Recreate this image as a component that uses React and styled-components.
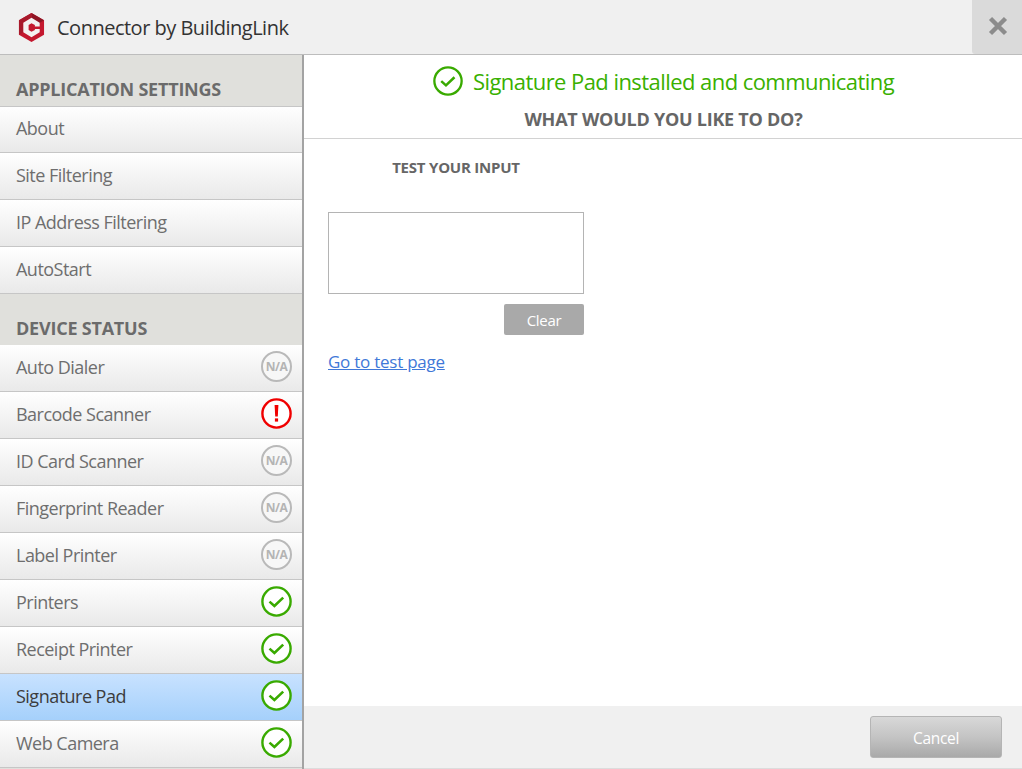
import React from 'react';
import styled, { createGlobalStyle } from 'styled-components';

const GlobalStyle = createGlobalStyle`
  html, body { margin: 0; padding: 0; background: #fff; }
  body { font-family: "Open Sans", "Noto Sans", sans-serif; overflow: hidden; }
`;

const Shell = styled.div`
  width: 1022px;
  height: 769px;
  display: flex;
  flex-direction: column;
  overflow: hidden;
`;

const TitleBar = styled.header`
  height: 54px;
  flex: none;
  display: flex;
  align-items: center;
  justify-content: space-between;
  background: #f0f0f0;
  border-bottom: 1px solid #bdbdbd;
`;

const Brand = styled.div`
  display: flex;
  align-items: center;
  gap: 12px;
  padding-left: 18px;
  font-size: 20px;
  letter-spacing: -0.5px;
  color: #333;
`;

const CloseButton = styled.button`
  width: 50px;
  height: 54px;
  border: 0;
  padding: 0 0 2px 2px;
  background: #dadada;
  border-bottom-left-radius: 3px;
  display: flex;
  align-items: center;
  justify-content: center;
`;

const Body = styled.div`
  flex: 1;
  display: flex;
  min-height: 0;
`;

const Sidebar = styled.nav`
  width: 302px;
  flex: none;
  border-right: 2px solid #a3a3a3;
  background: #e0e0dc;
`;

const SectionTitle = styled.h2`
  margin: 0;
  height: 51px;
  box-sizing: border-box;
  display: flex;
  align-items: flex-end;
  padding: 0 0 5px 16px;
  background: #e0e0dc;
  font-size: 18px;
  line-height: 24px;
  font-weight: 700;
  letter-spacing: -0.22px;
  color: #6b6b6b;
`;

const Row = styled.div`
  height: 47px;
  box-sizing: border-box;
  display: flex;
  align-items: center;
  justify-content: space-between;
  padding: 0 10px 2px 16px;
  border-bottom: 1px solid #c6c6c6;
  background: ${p => p.$active
    ? 'linear-gradient(#c8e2ff, #a5d0fb)'
    : 'linear-gradient(#ffffff, #e9e9e9)'};
  color: ${p => p.$active ? '#3c3c3c' : '#6e6e6e'};
  font-size: 18px;
  letter-spacing: -0.52px;

  &:first-of-type {
    box-shadow: inset 0 1px #c6c6c6;
  }
`;

const IconSlot = styled.span`
  display: flex;
  margin-bottom: 1px;
`;

const Main = styled.main`
  flex: 1;
  display: flex;
  flex-direction: column;
  min-width: 0;
`;

const StatusHead = styled.div`
  height: 84px;
  flex: none;
  box-sizing: border-box;
  border-bottom: 1px solid #d2d2d2;
  display: flex;
  flex-direction: column;
  align-items: center;
  padding: 10px 0 0 1px;
`;

const StatusLine = styled.div`
  display: flex;
  align-items: center;
  gap: 10px;
  height: 32px;
  font-size: 22px;
  letter-spacing: -0.56px;
  color: #39b000;
`;

const Question = styled.div`
  margin-top: 11px;
  font-size: 18px;
  line-height: 22px;
  font-weight: 700;
  letter-spacing: -0.25px;
  color: #666;
`;

const Content = styled.div`
  flex: 1;
  padding: 18px 0 0 24px;
`;

const InputColumn = styled.div`
  width: 256px;
  display: flex;
  flex-direction: column;
`;

const InputTitle = styled.div`
  text-align: center;
  font-size: 15px;
  line-height: 20px;
  font-weight: 700;
  letter-spacing: -0.22px;
  color: #666;
`;

const SignatureBox = styled.div`
  height: 82px;
  box-sizing: border-box;
  margin-top: 35px;
  border: 1px solid #b4b4b4;
  background: #fff;
`;

const ClearButton = styled.button`
  align-self: flex-end;
  width: 80px;
  height: 31px;
  margin-top: 10px;
  border: 0;
  border-radius: 2px;
  background: #a9a9a9;
  color: #fff;
  font-family: inherit;
  font-size: 15px;
  letter-spacing: -0.3px;
`;

const TestLink = styled.a`
  margin-top: 16px;
  font-size: 17px;
  line-height: 22px;
  letter-spacing: -0.25px;
  color: #3f78d8;
  text-decoration: underline;
`;

const Footer = styled.footer`
  height: 63px;
  flex: none;
  box-sizing: border-box;
  background: #f0f0f0;
  border-bottom: 1px solid #dcdcdc;
  display: flex;
  justify-content: flex-end;
  align-items: flex-start;
  padding: 10px 20px 0 0;
`;

const CancelButton = styled.button`
  width: 132px;
  height: 42px;
  padding-top: 3px;
  border: 1px solid #b5b5b5;
  border-radius: 3px;
  background: linear-gradient(#d8d8d8, #c4c4c4 50%, #a9a9a9);
  color: #fff;
  font-family: inherit;
  font-size: 15.5px;
  letter-spacing: -0.3px;
`;

const Logo = () => (
  <svg width="27" height="31" viewBox="0 0 28 32">
    <path d="M14 1 L27 8.5 V23.5 L14 31 L1 23.5 V8.5 Z" fill="#c4182f" />
    <path d="M14 1 L27 8.5 L21 12 L14 8 Z" fill="#8e1524" />
    <path d="M1 8.5 L14 1 V6 L5.5 11 V21 L1 23.5 Z" fill="#a8192b" />
    <path d="M14 6 L22.5 11 V15 H17.5 V13.5 L14 11.5 L11 13.3 V18.7 L14 20.5 L17.5 18.5 V17.5 H22.5 V21 L14 26 L5.5 21 V11 Z" fill="#f4f1f1" />
  </svg>
);

const CloseIcon = () => (
  <svg width="20" height="20" viewBox="0 0 20 20">
    <path d="M2.5 2.5 L17.5 17.5 M17.5 2.5 L2.5 17.5" stroke="#8c8c8c" strokeWidth="4.4" />
  </svg>
);

const CheckIcon = ({ size = 31 }) => (
  <svg width={size} height={size} viewBox="0 0 31 31">
    <circle cx="15.5" cy="15.5" r="14.1" fill="#fff" stroke="#39aa00" strokeWidth="2.4" />
    <path d="M8.5 15.6 L13.4 20 L22.2 11.6" fill="none" stroke="#39aa00" strokeWidth="2.6" />
  </svg>
);

const AlertIcon = () => (
  <svg width="31" height="31" viewBox="0 0 31 31">
    <circle cx="15.5" cy="15.5" r="14.1" fill="#fff" stroke="#f00000" strokeWidth="2.4" />
    <path d="M13.6 7 H17.4 L16.8 18.6 H14.2 Z" fill="#f00000" />
    <rect x="13.9" y="20.4" width="3.2" height="3.2" fill="#f00000" />
  </svg>
);

const NaBadge = styled.span`
  width: 31px;
  height: 31px;
  box-sizing: border-box;
  border: 2.4px solid #b9b9b9;
  border-radius: 50%;
  background: #f7f7f7;
  display: flex;
  align-items: center;
  justify-content: center;
  font-size: 12px;
  font-weight: 700;
  color: #b4b4b4;
`;

const settings = ['About', 'Site Filtering', 'IP Address Filtering', 'AutoStart'];

const devices = [
  { name: 'Auto Dialer', status: 'na' },
  { name: 'Barcode Scanner', status: 'alert' },
  { name: 'ID Card Scanner', status: 'na' },
  { name: 'Fingerprint Reader', status: 'na' },
  { name: 'Label Printer', status: 'na' },
  { name: 'Printers', status: 'ok' },
  { name: 'Receipt Printer', status: 'ok' },
  { name: 'Signature Pad', status: 'ok', active: true },
  { name: 'Web Camera', status: 'ok' },
];

const StatusIcon = ({ status }) => {
  if (status === 'ok') return <CheckIcon />;
  if (status === 'alert') return <AlertIcon />;
  return <NaBadge>N/A</NaBadge>;
};

export default function App() {
  return (
    <Shell>
      <GlobalStyle />
      <TitleBar>
        <Brand>
          <Logo />
          Connector by BuildingLink
        </Brand>
        <CloseButton aria-label="Close">
          <CloseIcon />
        </CloseButton>
      </TitleBar>
      <Body>
        <Sidebar>
          <SectionTitle>APPLICATION SETTINGS</SectionTitle>
          {settings.map(name => <Row key={name}>{name}</Row>)}
          <SectionTitle>DEVICE STATUS</SectionTitle>
          {devices.map(d => (
            <Row key={d.name} $active={d.active}>
              {d.name}
              <IconSlot><StatusIcon status={d.status} /></IconSlot>
            </Row>
          ))}
        </Sidebar>
        <Main>
          <StatusHead>
            <StatusLine>
              <CheckIcon size={30} />
              Signature Pad installed and communicating
            </StatusLine>
            <Question>WHAT WOULD YOU LIKE TO DO?</Question>
          </StatusHead>
          <Content>
            <InputColumn>
              <InputTitle>TEST YOUR INPUT</InputTitle>
              <SignatureBox />
              <ClearButton>Clear</ClearButton>
              <TestLink href="#">Go to test page</TestLink>
            </InputColumn>
          </Content>
          <Footer>
            <CancelButton>Cancel</CancelButton>
          </Footer>
        </Main>
      </Body>
    </Shell>
  );
}
